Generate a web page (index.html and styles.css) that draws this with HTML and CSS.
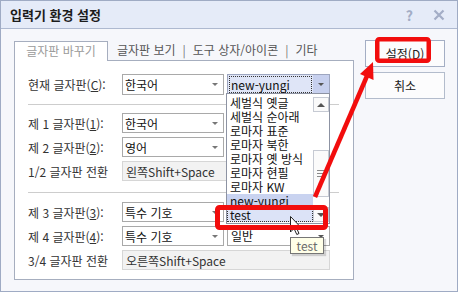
FILE: index.html
```html
<!DOCTYPE html>
<html lang="ko">

<head>
    <meta charset="UTF-8">
    <title>입력기 환경 설정</title>
    <link rel="stylesheet" href="styles.css">
</head>

<body>
    <div class="window">
        <div class="titlebar">
            <span class="title">입력기 환경 설정</span>
            <span class="help">?</span>
            <svg class="close" width="12" height="12" viewBox="0 0 12 12">
                <path d="M1.5 1.5 L10.5 10.5 M10.5 1.5 L1.5 10.5" stroke="#a3adc6" stroke-width="2.2" />
            </svg>
        </div>

        <div class="content">
            <div class="tabbox">
                <div class="tabs">
                    <div class="tab active">글자판 바꾸기</div>
                    <div class="tab">글자판 보기</div>
                    <span class="tab-sep">|</span>
                    <div class="tab">도구 상자/아이콘</div>
                    <span class="tab-sep">|</span>
                    <div class="tab">기타</div>
                </div>

                <div class="panel">
                    <div class="row first">
                        <span class="label">현재 글자판(<u>C</u>):</span>
                        <div class="select">한국어</div>
                        <div class="combo focused">
                            <span class="focus-rect">new-yungi</span>
                            <span class="drop-btn"></span>
                        </div>
                    </div>

                    <div class="divider"></div>

                    <div class="row">
                        <span class="label">제 1 글자판(<u>1</u>):</span>
                        <div class="select">한국어</div>
                    </div>
                    <div class="row">
                        <span class="label">제 2 글자판(<u>2</u>):</span>
                        <div class="select">영어</div>
                    </div>
                    <div class="row">
                        <span class="label">1/2 글자판 전환</span>
                        <div class="field">왼쪽Shift+Space</div>
                    </div>

                    <div class="divider second"></div>

                    <div class="row">
                        <span class="label">제 3 글자판(<u>3</u>):</span>
                        <div class="select">특수 기호</div>
                    </div>
                    <div class="row">
                        <span class="label">제 4 글자판(<u>4</u>):</span>
                        <div class="select">특수 기호</div>
                        <div class="combo">
                            <span class="combo-text">일반</span>
                            <span class="drop-btn"></span>
                        </div>
                    </div>
                    <div class="row">
                        <span class="label">3/4 글자판 전환</span>
                        <div class="field">오른쪽Shift+Space</div>
                    </div>

                    <!-- opened list of the current layout combo -->
                    <div class="droplist">
                        <div class="items">
                            <div class="item">세벌식 옛글</div>
                            <div class="item">세벌식 순아래</div>
                            <div class="item">로마자 표준</div>
                            <div class="item">로마자 북한</div>
                            <div class="item">로마자 옛 방식</div>
                            <div class="item">로마자 현필</div>
                            <div class="item">로마자 KW</div>
                            <div class="item selected">new-yungi</div>
                            <div class="item hover">test</div>
                        </div>
                        <div class="scrollbar">
                            <div class="sb-btn up"></div>
                            <div class="sb-thumb">
                                <span></span><span></span><span></span>
                            </div>
                            <div class="sb-btn down"></div>
                        </div>
                    </div>

                    <div class="tooltip">test</div>
                </div>
            </div>

            <div class="buttons">
                <div class="btn default">설정(<u>D</u>)</div>
                <div class="btn">취소</div>
            </div>
        </div>

        <svg class="marks" width="458" height="292" viewBox="0 0 458 292">
            <path d="M290.5 216.5 L290.5 232 L294 228.5 L296.8 234.5 L299 233.5 L296.3 227.5 L301 227.5 Z"
                fill="#fff" stroke="#222" stroke-width="1" />
            <rect x="377.25" y="39.25" width="51.5" height="21.5" rx="2" fill="none" stroke="#f20d0d"
                stroke-width="4.5" />
            <rect x="217.5" y="207.5" width="108" height="20" rx="2" fill="none" stroke="#f20d0d"
                stroke-width="5" />
            <path d="M315 197 L367 76" stroke="#f20d0d" stroke-width="4.5" />
            <polygon points="373,62 360,74 373.5,80" fill="#f20d0d" />
        </svg>
    </div>
</body>

</html>
```

FILE: styles.css
```css
* {
    box-sizing: border-box;
}

body {
    margin: 0;
    font-family: "Noto Sans CJK KR", "Noto Sans", sans-serif;
    font-size: 12px;
    color: #2e2e2e;
}

u {
    text-decoration: underline;
    text-underline-offset: 1px;
}

.window {
    position: relative;
    width: 458px;
    height: 292px;
    border: 1px solid #9fabc4;
    background-color: #f6f7fb;
}

.titlebar {
    height: 28px;
    display: flex;
    align-items: center;
    padding-left: 9px;
    background-color: #e5ebf8;
    border-bottom: 1px solid #aeb9d0;
}

.title {
    flex: 1;
    font-size: 13px;
    font-weight: bold;
    color: #1c1c1c;
}

.help {
    font-size: 14px;
    font-weight: bold;
    color: #a3adc6;
    margin-right: 20px;
}

.close {
    margin-right: 12px;
}

.content {
    display: flex;
    padding: 12px 0 0 13px;
}

.tabbox {
    width: 340px;
}

.tabs {
    display: flex;
    align-items: flex-start;
    height: 19px;
    color: #555;
}

.tab {
    line-height: 18px;
    white-space: nowrap;
}

.tab.active {
    position: relative;
    z-index: 1;
    width: 94px;
    height: 20px;
    margin-right: 9px;
    text-align: center;
    color: #9a9a9a;
    background-color: #fff;
    border: 1px solid #a6aebf;
    border-bottom: none;
}

.tab-sep {
    line-height: 18px;
    margin: 0 7px;
    color: #777;
}

.panel {
    position: relative;
    height: 220px;
    padding: 13px 14px 0 13px;
    background-color: #fff;
    border: 1px solid #a6aebf;
}

.row {
    display: flex;
    align-items: center;
    height: 20px;
    margin-top: 4px;
}

.row.first {
    height: 21px;
    margin-top: 0;
}

.label {
    width: 94px;
    flex-shrink: 0;
    white-space: nowrap;
    color: #333;
}

.divider {
    height: 1px;
    margin: 9px 0 8px;
    background-color: #cdcdcd;
}

.divider.second {
    margin: 11px 0 9px;
}

.select {
    display: flex;
    align-items: center;
    width: 102px;
    height: 100%;
    padding-left: 2px;
    color: #111;
    border: 1px solid #a9a9a9;
}

.select::after {
    content: "";
    margin-left: auto;
    margin-right: 5px;
    border-top: 3px solid #777;
    border-left: 3px solid transparent;
    border-right: 3px solid transparent;
}

.field {
    display: flex;
    align-items: center;
    width: 208px;
    height: 100%;
    padding-left: 3px;
    color: #333;
    background-color: #f2f2f2;
    border: 1px solid #d6d6d6;
}

.combo {
    display: flex;
    width: 103px;
    height: 100%;
    margin-left: 3px;
    border: 1px solid #a9a9a9;
    background-color: #fff;
}

.combo.focused {
    background-color: #dfe5f7;
    border-color: #9ea6bf;
}

.focus-rect {
    flex: 1;
    margin: 1px;
    padding-left: 1px;
    line-height: 15px;
    color: #111;
    border: 1px dotted #333;
}

.combo-text {
    flex: 1;
    padding-left: 3px;
    line-height: 18px;
    color: #111;
}

.drop-btn {
    display: flex;
    align-items: center;
    justify-content: center;
    width: 16px;
}

.combo.focused .drop-btn {
    background-color: #c7d0ee;
}

.drop-btn::after {
    content: "";
    border-top: 3px solid #555;
    border-left: 3px solid transparent;
    border-right: 3px solid transparent;
}

.droplist {
    position: absolute;
    left: 211px;
    top: 32px;
    width: 104px;
    height: 131px;
    display: flex;
    background-color: #fff;
    border: 1px solid #8d93a3;
}

.items {
    flex: 1;
    padding-top: 2px;
}

.item {
    height: 14px;
    line-height: 14px;
    padding-left: 3px;
    white-space: nowrap;
    color: #111;
}

.item.selected {
    background-color: #c9d3f0;
}

.item.hover {
    background-color: #dce3f7;
    outline: 1px dotted #333;
    outline-offset: -1px;
}

.scrollbar {
    width: 16px;
    display: flex;
    flex-direction: column;
    padding-top: 3px;
}

.sb-btn {
    height: 15px;
    display: flex;
    align-items: center;
    justify-content: center;
    border: 1px solid #c6cad3;
    background-color: #fafafa;
}

.sb-btn.up::after {
    content: "";
    border-bottom: 4px solid #555;
    border-left: 4px solid transparent;
    border-right: 4px solid transparent;
}

.sb-btn.down {
    margin-top: auto;
    margin-bottom: 1px;
}

.sb-btn.down::after {
    content: "";
    border-top: 4px solid #555;
    border-left: 4px solid transparent;
    border-right: 4px solid transparent;
}

.sb-thumb {
    height: 47px;
    margin-top: 38px;
    display: flex;
    flex-direction: column;
    align-items: center;
    justify-content: center;
    gap: 2px;
    border: 1px solid #c6cad3;
    background-color: #fbfbfb;
}

.sb-thumb span {
    width: 8px;
    height: 1px;
    background-color: #8a8a8a;
}

.tooltip {
    position: absolute;
    left: 275px;
    top: 176px;
    width: 34px;
    height: 17px;
    line-height: 15px;
    text-align: center;
    color: #6b6b6b;
    background-color: #ffffe8;
    border: 1px solid #767676;
    box-shadow: 2px 2px 1px rgba(0, 0, 0, 0.15);
}

.buttons {
    margin: -1px 0 0 11px;
}

.btn {
    width: 80px;
    height: 27px;
    display: flex;
    align-items: center;
    justify-content: center;
    color: #222;
    background-color: #fcfcfd;
    border: 1px solid #b3bccc;
}

.btn.default {
    border-color: #a4aec4;
}

.btn + .btn {
    margin-top: 5px;
}

.marks {
    position: absolute;
    left: -1px;
    top: -1px;
    pointer-events: none;
}
```
